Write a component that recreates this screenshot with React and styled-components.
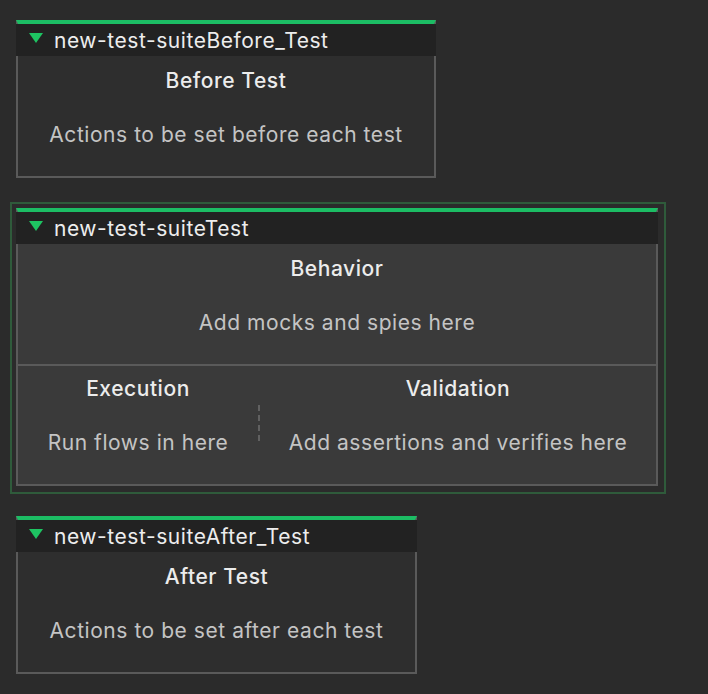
import React from "react";
import styled, { createGlobalStyle } from "styled-components";

const GlobalStyle = createGlobalStyle`
  html, body {
    margin: 0;
    padding: 0;
    background: #2b2b2b;
    font-family: Inter, "Noto Sans", sans-serif;
  }
`;

const Canvas = styled.div`
  display: flex;
  flex-direction: column;
  align-items: flex-start;
  gap: 16px;
  padding: 14px 0 0 10px;
  min-height: 694px;
  box-sizing: border-box;
`;

const Frame = styled.div`
  padding: 4px 6px 6px 4px;
  border: 2px solid ${(p) => (p.$selected ? "#2f5b3b" : "transparent")};
`;

const Block = styled.div`
  width: ${(p) => p.$width}px;
  box-sizing: border-box;
  border: 2px solid #5a5a5a;
  border-top: 4px solid #1cbd64;
  background: ${(p) => (p.$selected ? "#3a3a3a" : "#2e2e2e")};
`;

const Header = styled.div`
  height: 32px;
  display: flex;
  align-items: center;
  gap: 11px;
  background: #222222;
  color: #ededed;
  font-size: 21px;
  letter-spacing: 0.55px;
  margin: 0 -2px;
  padding-left: 13px;
`;

const Caret = styled.span`
  width: 0;
  height: 0;
  border-left: 7px solid transparent;
  border-right: 7px solid transparent;
  border-top: 10px solid #1ec462;
  margin-top: -5px;
`;

const Section = styled.div`
  display: flex;
  flex-direction: column;
  align-items: center;
  padding: ${(p) => (p.$compact ? "11px 0 29px" : "13px 0 29px")};
  gap: 30px;
`;

const Title = styled.div`
  font-size: 21px;
  line-height: 24px;
  font-weight: 470;
  letter-spacing: 0.55px;
  color: #ececec;
  white-space: nowrap;
`;

const Desc = styled.div`
  font-size: 21px;
  line-height: 24px;
  letter-spacing: 0.55px;
  color: #c4c4c4;
  white-space: nowrap;
`;

const Columns = styled.div`
  display: flex;
  border-top: 2px solid #5a5a5a;
`;

const Column = styled(Section)`
  width: ${(p) => p.$width}px;
`;

const DashedDivider = styled.div`
  width: 2px;
  height: 36px;
  margin-top: 39px;
  background: repeating-linear-gradient(
    to bottom,
    #616161 0 6px,
    transparent 6px 10px
  );
`;

const BlockHeader = ({ name }) => (
  <Header>
    <Caret />
    <span>{name}</span>
  </Header>
);

export default function App() {
  return (
    <>
      <GlobalStyle />
      <Canvas>
        <Frame>
          <Block $width={420}>
            <BlockHeader name="new-test-suiteBefore_Test" />
            <Section>
              <Title>Before Test</Title>
              <Desc>Actions to be set before each test</Desc>
            </Section>
          </Block>
        </Frame>

        <Frame $selected>
          <Block $width={642} $selected>
            <BlockHeader name="new-test-suiteTest" />
            <Section>
              <Title>Behavior</Title>
              <Desc>Add mocks and spies here</Desc>
            </Section>
            <Columns>
              <Column $compact $width={240}>
                <Title>Execution</Title>
                <Desc>Run flows in here</Desc>
              </Column>
              <DashedDivider />
              <Column $compact $width={396}>
                <Title>Validation</Title>
                <Desc>Add assertions and verifies here</Desc>
              </Column>
            </Columns>
          </Block>
        </Frame>

        <Frame>
          <Block $width={401}>
            <BlockHeader name="new-test-suiteAfter_Test" />
            <Section>
              <Title>After Test</Title>
              <Desc>Actions to be set after each test</Desc>
            </Section>
          </Block>
        </Frame>
      </Canvas>
    </>
  );
}
